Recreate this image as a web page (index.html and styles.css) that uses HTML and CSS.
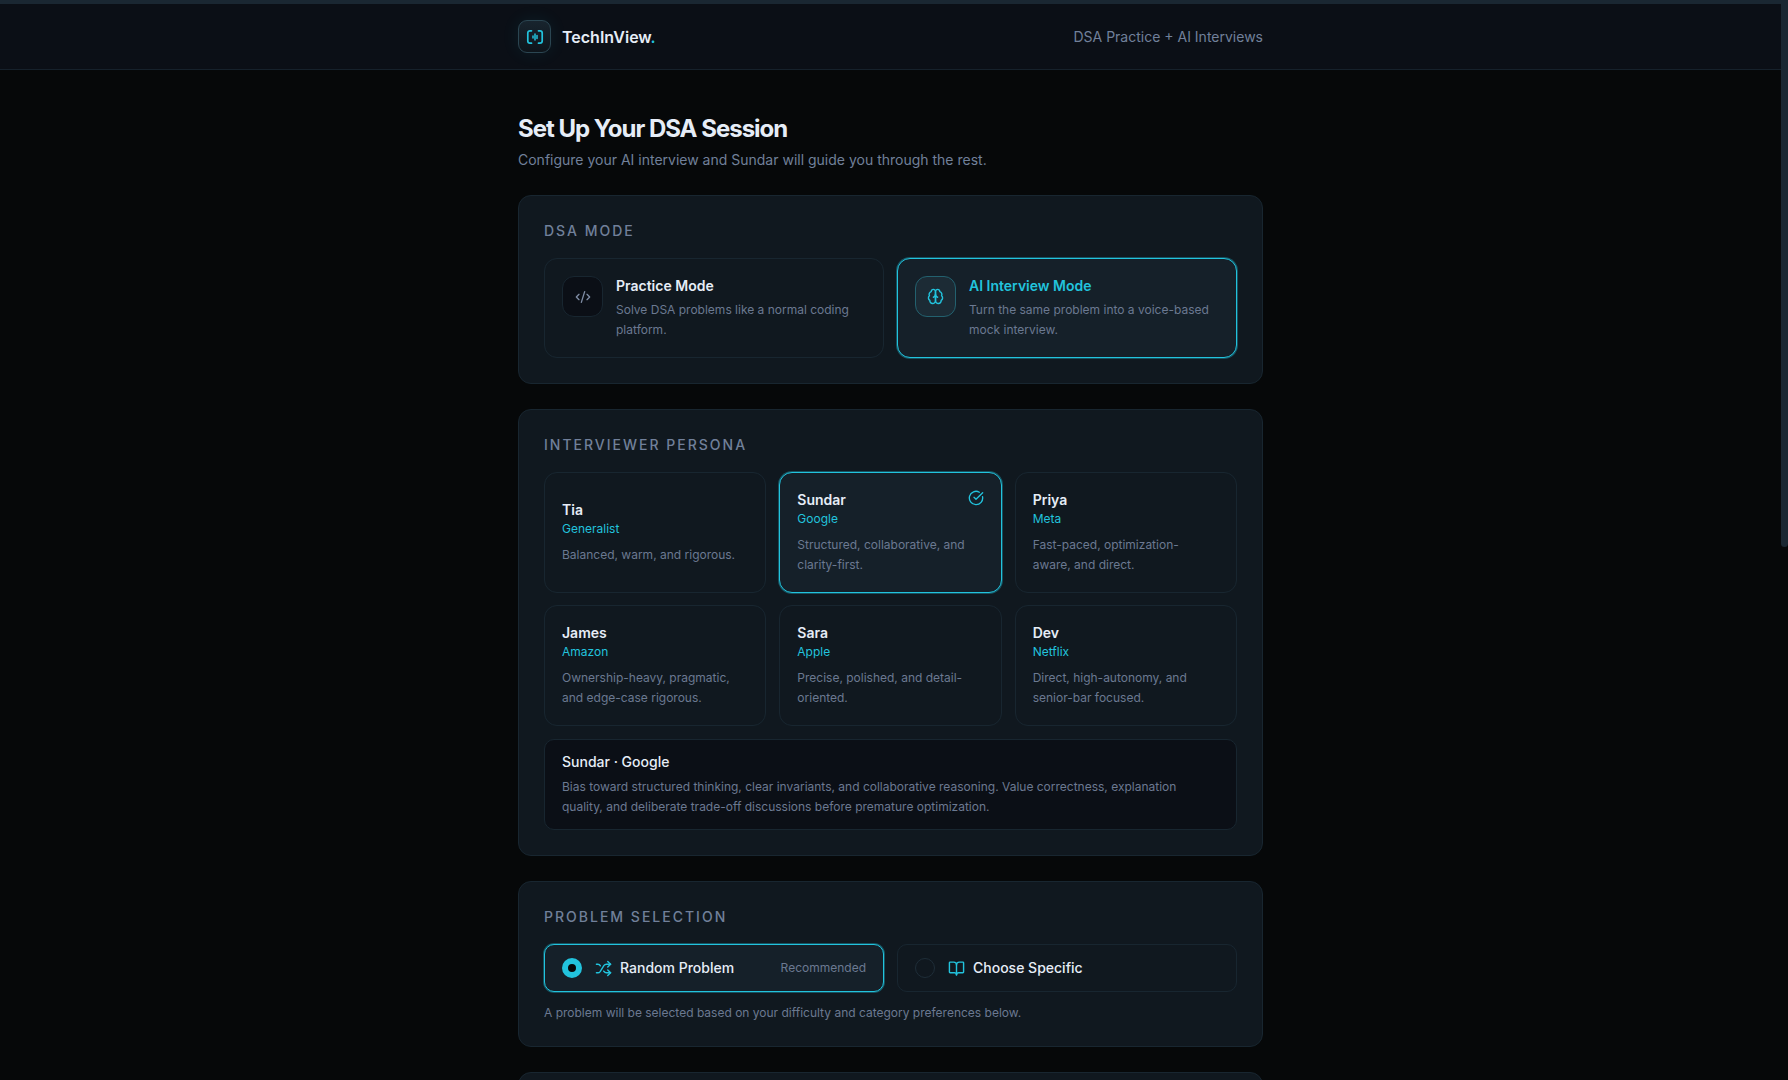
FILE: index.html
```html
<!DOCTYPE html>
<html lang="en">
  <head>
    <meta charset="utf-8">
    <title>TechInView - DSA Session</title>
    <link rel="stylesheet" href="styles.css">
  </head>
  <body>
    <div class="page">
      <header class="navbar">
        <div class="container navbar-inner">
          <a class="brand" href="#">
            <span class="brand-icon">
              <svg width="18" height="16" viewBox="0 0 18 16" fill="none" stroke="currentColor" stroke-width="1.7" stroke-linecap="round" stroke-linejoin="round">
                <path d="M5.5 1.8H4a2.2 2.2 0 0 0-2.2 2.2v8A2.2 2.2 0 0 0 4 14.200h1.500M12.500 1.800H14a2.200 2.200 0 0 1 2.200 2.200v8a2.200 2.200 0 0 1-2.200 2.200h-1.500"/>
                <path stroke-width="1.5" d="M7 7v2M9 5v6M11 6.500v3"/>
              </svg>
            </span>
            <span class="brand-name">TechInView<span class="dot">.</span></span>
          </a>
          <span class="tagline">DSA Practice + AI Interviews</span>
        </div>
      </header>

      <main class="container content">
        <h1>Set Up Your DSA Session</h1>
        <p class="subtitle">Configure your AI interview and Sundar will guide you through the rest.</p>

        <section class="panel">
          <h2>DSA Mode</h2>
          <div class="grid two">
            <button type="button" class="card mode">
              <span class="mode-icon">
                <svg width="16" height="16" viewBox="0 0 24 24" fill="none" stroke="currentColor" stroke-width="2" stroke-linecap="round" stroke-linejoin="round">
                  <path d="m18 16 4-4-4-4M6 8l-4 4 4 4M14.5 4l-5 16"/>
                </svg>
              </span>
              <span class="mode-text">
                <span class="title">Practice Mode</span>
                <span class="desc">Solve DSA problems like a normal coding platform.</span>
              </span>
            </button>
            <button type="button" class="card mode selected">
              <span class="mode-icon">
                <svg width="17" height="17" viewBox="0 0 24 24" fill="none" stroke="currentColor" stroke-width="2" stroke-linecap="round" stroke-linejoin="round">
                  <path d="M12 5a3 3 0 1 0-5.997.125 4 4 0 0 0-2.526 5.77 4 4 0 0 0 .556 6.588A4 4 0 1 0 12 18Z"/>
                  <path d="M12 5a3 3 0 1 1 5.997.125 4 4 0 0 1 2.526 5.77 4 4 0 0 1-.556 6.588A4 4 0 1 1 12 18Z"/>
                  <path d="M15 13a4.5 4.5 0 0 1-3-4 4.5 4.5 0 0 1-3 4"/>
                </svg>
              </span>
              <span class="mode-text">
                <span class="title">AI Interview Mode</span>
                <span class="desc">Turn the same problem into a voice-based mock interview.</span>
              </span>
            </button>
          </div>
        </section>

        <section class="panel">
          <h2>Interviewer Persona</h2>
          <div class="grid three">
            <button type="button" class="card">
              <span class="title">Tia</span>
              <span class="company">Generalist</span>
              <span class="desc">Balanced, warm, and rigorous.</span>
            </button>
            <button type="button" class="card selected">
              <svg class="check" width="16" height="16" viewBox="0 0 24 24" fill="none" stroke="currentColor" stroke-width="2" stroke-linecap="round" stroke-linejoin="round">
                <path d="M21.801 10A10 10 0 1 1 17 3.335"/>
                <path d="m9 11 3 3L22 4"/>
              </svg>
              <span class="title">Sundar</span>
              <span class="company">Google</span>
              <span class="desc">Structured, collaborative, and clarity-first.</span>
            </button>
            <button type="button" class="card">
              <span class="title">Priya</span>
              <span class="company">Meta</span>
              <span class="desc">Fast-paced, optimization-<br>aware, and direct.</span>
            </button>
            <button type="button" class="card">
              <span class="title">James</span>
              <span class="company">Amazon</span>
              <span class="desc">Ownership-heavy, pragmatic, and edge-case rigorous.</span>
            </button>
            <button type="button" class="card">
              <span class="title">Sara</span>
              <span class="company">Apple</span>
              <span class="desc">Precise, polished, and detail-oriented.</span>
            </button>
            <button type="button" class="card">
              <span class="title">Dev</span>
              <span class="company">Netflix</span>
              <span class="desc">Direct, high-autonomy, and senior-bar focused.</span>
            </button>
          </div>
          <div class="summary">
            <h3>Sundar · Google</h3>
            <p class="desc">Bias toward structured thinking, clear invariants, and collaborative reasoning. Value correctness, explanation quality, and deliberate trade-off discussions before premature optimization.</p>
          </div>
        </section>

        <section class="panel">
          <h2>Problem Selection</h2>
          <div class="grid two">
            <label class="option" for="random">
              <input type="radio" id="random" name="problem" checked>
              <svg width="17" height="17" viewBox="0 0 24 24" fill="none" stroke="currentColor" stroke-width="2" stroke-linecap="round" stroke-linejoin="round">
                <path d="m18 14 4 4-4 4M18 2l4 4-4 4"/>
                <path d="M2 18h1.973a4 4 0 0 0 3.3-1.7l5.454-8.6a4 4 0 0 1 3.3-1.7H22"/>
                <path d="M2 6h1.972a4 4 0 0 1 3.6 2.2M22 18h-6.041a4 4 0 0 1-3.3-1.8l-.359-.45"/>
              </svg>
              <span class="option-name">Random Problem</span>
              <span class="hint">Recommended</span>
            </label>
            <label class="option" for="specific">
              <input type="radio" id="specific" name="problem">
              <svg width="17" height="17" viewBox="0 0 24 24" fill="none" stroke="currentColor" stroke-width="2" stroke-linecap="round" stroke-linejoin="round">
                <path d="M12 7v14"/>
                <path d="M3 18a1 1 0 0 1-1-1V4a1 1 0 0 1 1-1h5a4 4 0 0 1 4 4 4 4 0 0 1 4-4h5a1 1 0 0 1 1 1v13a1 1 0 0 1-1 1h-6a3 3 0 0 0-3 3 3 3 0 0 0-3-3z"/>
              </svg>
              <span class="option-name">Choose Specific</span>
            </label>
          </div>
          <p class="note">A problem will be selected based on your difficulty and category preferences below.</p>
        </section>

        <section class="panel next"></section>
      </main>
    </div>
    <div class="scrollbar"><div class="thumb"></div></div>
  </body>
</html>
```
FILE: styles.css
```css
* {
  box-sizing: border-box;
}

body {
  margin: 0;
  height: 100vh;
  display: flex;
  overflow: hidden;
  border-top: 4px solid #1a2732;
  background: #060809;
  color: #e6edf7;
  font-family: Inter, "Liberation Sans", sans-serif;
  font-size: 14px;
  line-height: 20px;
}

h1, h2, h3, p {
  margin: 0;
}

.page {
  flex: 1;
  min-width: 0;
}

.container {
  width: 100%;
  max-width: 745px;
  margin: 0 auto;
}

/* Navbar */
.navbar {
  background: #0b0f16;
  border-bottom: 1px solid #16212b;
}

.navbar-inner {
  display: flex;
  justify-content: space-between;
  align-items: center;
  padding: 16px 0;
}

.brand {
  display: flex;
  align-items: center;
  gap: 11px;
  color: #e6edf7;
  text-decoration: none;
}

.brand-icon {
  display: flex;
  align-items: center;
  justify-content: center;
  width: 33px;
  height: 33px;
  border: 1px solid #2b4652;
  border-radius: 9px;
  background: linear-gradient(#18242e, #0e151b);
  box-shadow: 0 0 18px rgba(34, 211, 238, 0.08);
  color: #22c3dd;
}

.brand-name {
  font-size: 16px;
  font-weight: 600;
}

.dot {
  color: #22c3dd;
}

.tagline {
  color: #71809a;
}

/* Content */
.content {
  padding-top: 43px;
}

h1 {
  font-size: 24px;
  line-height: 32px;
  font-weight: 700;
  letter-spacing: -1px;
}

.subtitle {
  margin-top: 5px;
  margin-bottom: 25px;
  color: #71809a;
}

.panel {
  margin-bottom: 25px;
  padding: 25px;
  border: 1px solid #182630;
  border-radius: 13px;
  background: #10181f;
}

h2 {
  margin-bottom: 17px;
  color: #71809a;
  font-size: 14px;
  font-weight: 500;
  letter-spacing: 2px;
  text-transform: uppercase;
}

.grid {
  display: grid;
  gap: 12px 13px;
}

.two {
  grid-template-columns: repeat(2, 1fr);
}

.three {
  grid-template-columns: repeat(3, 1fr);
}

/* Cards */
.card {
  position: relative;
  padding: 17px;
  border: 1px solid #182630;
  border-radius: 13px;
  background: transparent;
  color: #e6edf7;
  font: inherit;
  text-align: left;
  cursor: pointer;
}

.card:hover {
  border-color: #2b4652;
}

.selected,
.selected:hover {
  border-color: #22c3dd;
  background: #152029;
  box-shadow: 0 0 0 1px rgba(34, 195, 221, 0.35);
}

.title,
.company,
.desc {
  display: block;
}

.title {
  font-weight: 600;
}

.company {
  color: #22c3dd;
  font-size: 12px;
  line-height: 17px;
}

.desc {
  color: #6b7991;
  font-size: 12px;
}

.company + .desc {
  margin-top: 8px;
}

.check {
  position: absolute;
  top: 17px;
  right: 17px;
  color: #22c3dd;
}

.mode {
  display: flex;
  align-items: flex-start;
  gap: 13px;
}

.mode .desc {
  margin-top: 4px;
}

.mode-icon {
  display: flex;
  flex-shrink: 0;
  align-items: center;
  justify-content: center;
  width: 41px;
  height: 41px;
  border: 1px solid #182630;
  border-radius: 12px;
  background: #0b0f16;
  color: #7f8da5;
}

.mode.selected .mode-icon {
  border-color: #23616f;
  background: #1c2b35;
  color: #22c3dd;
}

.mode.selected .title {
  color: #22c3dd;
}

.summary {
  margin-top: 13px;
  padding: 12px 17px;
  border: 1px solid #182630;
  border-radius: 10px;
  background: #0b0f16;
}

h3 {
  margin-bottom: 5px;
  font-size: 14px;
  font-weight: 500;
}

/* Problem options */
.option {
  display: flex;
  align-items: center;
  height: 48px;
  padding: 0 17px;
  border: 1px solid #182630;
  border-radius: 10px;
  cursor: pointer;
}

.option:has(input:checked) {
  border-color: #22c3dd;
  background: #152029;
  box-shadow: 0 0 0 1px rgba(34, 195, 221, 0.35);
}

.option input {
  appearance: none;
  width: 20px;
  height: 20px;
  margin: 0 13px 0 0;
  border: 1px solid #1e2d38;
  border-radius: 50%;
}

.option input:checked {
  border: 6px solid #22c3dd;
  background: #060809;
}

.option svg {
  margin-right: 8px;
  color: #22c3dd;
}

.option-name {
  font-weight: 500;
}

.hint {
  margin-left: auto;
  color: #6b7991;
  font-size: 12px;
}

.note {
  margin-top: 12px;
  color: #6b7991;
  font-size: 12px;
  line-height: 17px;
}

.next {
  min-height: 200px;
}

/* Scrollbar */
.scrollbar {
  width: 7px;
  background: #060809;
}

.thumb {
  height: 50.5%;
  border-radius: 0 0 4px 4px;
  background: #1a2732;
}
```
